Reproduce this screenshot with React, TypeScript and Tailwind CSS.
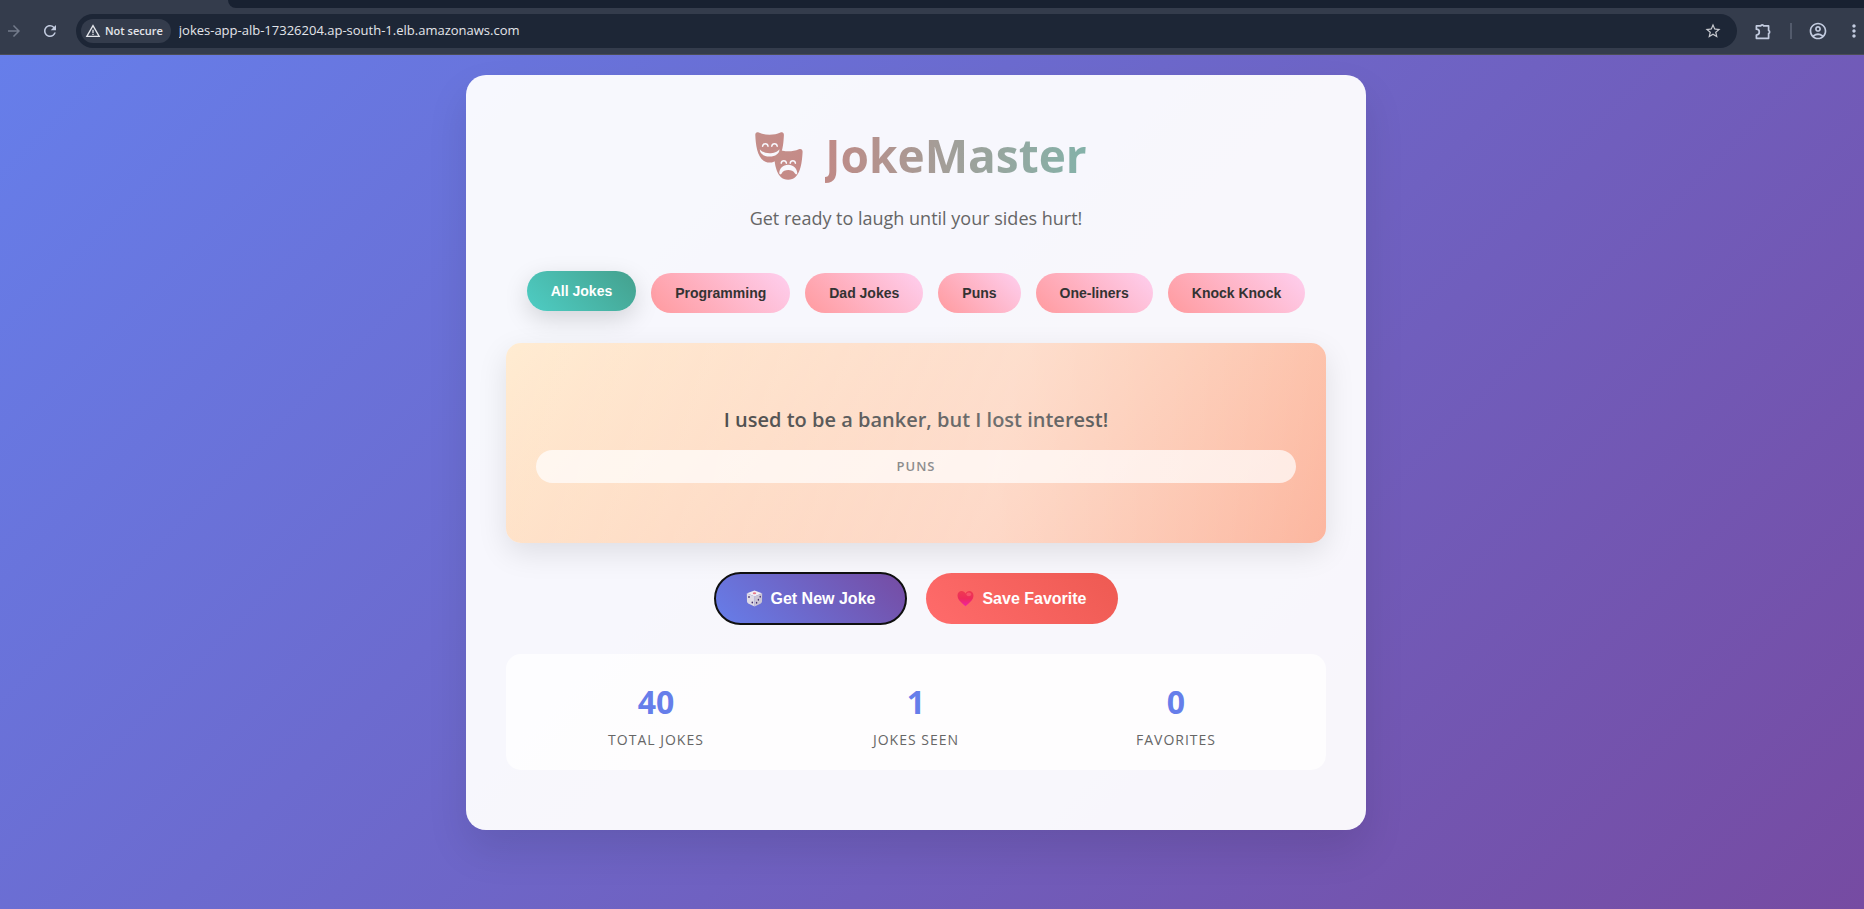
import React from "react";
import {
  MdArrowForward,
  MdMoreVert,
  MdOutlineAccountCircle,
  MdRefresh,
  MdStarBorder,
  MdWarningAmber,
} from "react-icons/md";

const categories = ["All Jokes", "Programming", "Dad Jokes", "Puns", "One-liners", "Knock Knock"];

const stats = [
  { value: 40, label: "Total Jokes" },
  { value: 1, label: "Jokes Seen" },
  { value: 0, label: "Favorites" },
];

function PuzzleIcon() {
  return (
    <svg viewBox="0 0 17 17" className="size-[17px]" fill="none" stroke="currentColor" strokeWidth="1.7" strokeLinejoin="round" aria-hidden="true">
      <path d="M1.4 2.9H5.7A1.6 1.6 0 0 1 8.7 2.9H13.6V7.5A1.6 1.6 0 0 1 13.6 10.5V15.3H1.4V12A2.8 2.8 0 0 0 1.4 6.2Z" />
    </svg>
  );
}

function MasksIcon() {
  return (
    <svg viewBox="0 0 48 48" className="ml-[10px] size-12 shrink-0" role="img" aria-label="Theatre masks">
      <defs>
        <linearGradient id="masks" x1="0" y1="0" x2="1" y2="1">
          <stop offset="0" stopColor="#c38f8a" />
          <stop offset="1" stopColor="#c68886" />
        </linearGradient>
      </defs>
      <g fill="url(#masks)">
        <path d="M0.3 3C0.2 0.6 1.8 -0.3 3.8 0.6C10 3.6 19.2 3.6 25.4 0.6C27.4 -0.3 29 0.6 28.9 3C28.4 14 27 30.6 14.8 30.6C2.6 30.6 0.8 14 0.3 3Z" />
        <path d="M18.9 20C18.8 17.6 20.4 16.3 22.6 17.2C29 20 37.6 20 43.8 17.2C46 16.3 47.7 17.4 47.6 19.8C47 31 45.4 47.8 33.2 47.8C21 47.8 19.4 31 18.9 20Z" />
      </g>
      <path d="M4.9 17.2C8 22.6 21 22.6 24.3 17.2C25 21 21 24.6 14.6 24.6C8.2 24.6 4.4 21 4.9 17.2Z" fill="#f8f8fd" />
      <path d="M24.3 41.6C24.3 36.4 28 32.8 33.2 32.8S42.2 36.4 42.3 41.6C41.6 43 40.4 42.4 39.8 41.2C37.6 37 28.8 37 26.8 41.2C26.2 42.4 25 43 24.3 41.6Z" fill="#f8f8fd" />
      <g fill="none" stroke="#f8f8fd" strokeWidth="1.5" strokeLinecap="round">
        <path d="M7.6 14.2C8 10.9 12.6 10.9 13 14.2M16.8 14.2C17.2 10.9 21.8 10.9 22.2 14.2" />
        <path d="M26.2 31.2C26.6 27.9 31 27.9 31.4 31.2M35.2 31.2C35.6 27.9 40 27.9 40.4 31.2" />
      </g>
    </svg>
  );
}

function DieIcon() {
  return (
    <svg viewBox="0 0 17 17" className="size-[17px]" aria-hidden="true">
      <path d="M8.5 0.6L16 3.2L8.6 6.4L1 3.2Z" fill="#f1edf2" />
      <path d="M0.8 3.2L8.6 6.4V16.4L2.2 13.4Q1 12.8 1 11.6Z" fill="#dfdbe5" />
      <path d="M16.2 3.2L8.6 6.4V16.4L14.8 13.4Q16 12.8 16 11.6Z" fill="#cbc5d4" />
      <ellipse cx="8.5" cy="3.2" rx="1.7" ry="1" fill="#e8788a" />
      <g fill="#45306a">
        <ellipse cx="3" cy="7.1" rx="0.8" ry="1" />
        <ellipse cx="6.3" cy="12.5" rx="0.8" ry="1" />
        <ellipse cx="14.2" cy="6.8" rx="0.7" ry="1" />
        <ellipse cx="12.4" cy="9.8" rx="0.7" ry="1" />
        <ellipse cx="10.6" cy="12.8" rx="0.7" ry="1" />
      </g>
    </svg>
  );
}

function HeartIcon() {
  return (
    <svg viewBox="0 0 17 17" className="size-[17px]" aria-hidden="true">
      <defs>
        <linearGradient id="heart" x1="0" y1="0" x2="0" y2="1">
          <stop offset="0" stopColor="#ef3a50" />
          <stop offset="0.5" stopColor="#ee2a5c" />
          <stop offset="1" stopColor="#f022a4" />
        </linearGradient>
      </defs>
      <path d="M8.5 16.2C6 13.4 0.5 10.4 0.5 5.4C0.5 2.7 2.4 1 4.6 1C6.4 1 7.8 1.9 8.5 3.4C9.2 1.9 10.6 1 12.4 1C14.6 1 16.5 2.7 16.5 5.4C16.5 10.4 11 13.4 8.5 16.2Z" fill="url(#heart)" />
      <ellipse cx="11.8" cy="4.4" rx="2.4" ry="1.8" fill="#ff6b7c" opacity="0.55" />
    </svg>
  );
}

function BrowserBar() {
  return (
    <header className="flex flex-col border-b border-[#4b4d55] bg-[#343c4c] text-[#c3cce0]">
      <div className="flex h-2">
        <div className="w-[228px] shrink-0" />
        <div className="flex-1 rounded-bl-[10px] bg-[#182131]" />
      </div>
      <div className="flex h-[46px] items-center pl-[5px]">
        <button aria-label="Forward" className="text-[#737b8b]">
          <MdArrowForward className="size-[18px]" />
        </button>
        <button aria-label="Reload" className="ml-[18px]">
          <MdRefresh className="size-[18px]" />
        </button>
        <div className="ml-[17px] flex h-[34px] flex-1 items-center rounded-full bg-[#1d2636] pr-[15px] pl-[5px]">
          <button className="flex h-6 items-center gap-1 rounded-full bg-[#343c4c] px-2 pl-1 text-[11px] font-semibold text-[#e3e5ea]">
            <MdWarningAmber className="size-4" />
            Not secure
          </button>
          <input
            aria-label="Address"
            defaultValue="jokes-app-alb-17326204.ap-south-1.elb.amazonaws.com"
            className="ml-2 min-w-0 flex-1 bg-transparent text-[13px] text-[#e3e5ea] outline-none"
          />
          <button aria-label="Bookmark" className="text-[#c8cad0]">
            <MdStarBorder className="size-[18px]" />
          </button>
        </div>
        <button aria-label="Extensions" className="ml-[18px]">
          <PuzzleIcon />
        </button>
        <div className="ml-[18px] h-4 w-[2px] bg-[#535b6c]" />
        <button aria-label="Profile" className="ml-4">
          <MdOutlineAccountCircle className="size-5" />
        </button>
        <button aria-label="Menu" className="ml-4">
          <MdMoreVert className="size-5" />
        </button>
      </div>
    </header>
  );
}

export default function App() {
  return (
    <div className="flex min-h-screen flex-col font-['Open_Sans','Noto_Sans',sans-serif]">
      <BrowserBar />
      <main className="flex-1 bg-[linear-gradient(135deg,#667eea_0%,#764ba2_100%)] py-5 pr-[52px] pl-5">
        <div className="mx-auto flex max-w-[900px] flex-col gap-[30px] rounded-[20px] bg-white/95 px-10 pt-10 pb-[60px] shadow-[0_20px_40px_rgba(0,0,0,0.1)]">
          <div className="mb-2 text-center">
            <h1 className="flex items-center justify-center gap-[22px] pt-1 text-[46px] leading-[73px] font-bold">
              <MasksIcon />
              <span className="bg-[linear-gradient(90deg,#c08a86,#a0a09a_50%,#84b2a9)] bg-clip-text text-transparent">JokeMaster</span>
            </h1>
            <p className="mt-[10px] text-[18px] leading-[33px] text-[#666]">Get ready to laugh until your sides hurt!</p>
          </div>

          <nav aria-label="Joke categories" className="flex flex-wrap justify-center gap-[15px] font-['Liberation_Sans',Arial,sans-serif] text-[14px] leading-4 font-bold">
            {categories.map((name, i) => (
              <button
                key={name}
                className={
                  i === 0
                    ? "-translate-y-[2px] rounded-[25px] bg-[linear-gradient(45deg,#4ecdc4,#44a08d)] px-6 py-3 text-white shadow-[0_8px_25px_rgba(0,0,0,0.15)]"
                    : "rounded-[25px] bg-[linear-gradient(45deg,#ff9a9e,#fecfef)] px-6 py-3 text-[#333]"
                }
              >
                {name}
              </button>
            ))}
          </nav>

          <section className="relative flex min-h-[200px] flex-col justify-center overflow-hidden rounded-[15px] bg-[linear-gradient(135deg,#ffecd2_0%,#fcb69f_100%)] p-[30px] text-center shadow-[0_10px_30px_rgba(0,0,0,0.1)]">
            <p className="text-[20px] leading-8 font-semibold text-[#333]">I used to be a banker, but I lost interest!</p>
            <p className="mt-[14px] rounded-[20px] bg-white/70 text-[13px] leading-[33px] font-semibold tracking-[1px] text-[#666] uppercase">Puns</p>
            <div className="pointer-events-none absolute inset-0 bg-[linear-gradient(100deg,transparent_0%,rgba(255,255,255,0.3)_60%,transparent_100%)]" />
          </section>

          <div className="flex flex-wrap justify-center gap-5 font-['Liberation_Sans',Arial,sans-serif] text-[16px] leading-[21px] font-bold text-white">
            <button className="flex items-center gap-2 rounded-[30px] bg-[linear-gradient(45deg,#667eea,#764ba2)] px-[31px] py-[15px] outline-2 -outline-offset-1 outline-[#101010]">
              <DieIcon />
              Get New Joke
            </button>
            <button className="flex items-center gap-2 rounded-[30px] bg-[linear-gradient(45deg,#ff6b6b,#ee5a52)] px-[31px] py-[15px]">
              <HeartIcon />
              Save Favorite
            </button>
          </div>

          <dl className="grid grid-cols-3 rounded-[15px] bg-white/80 px-5 pt-[22px] pb-[18px] text-center">
            {stats.map(({ value, label }) => (
              <div key={label} className="flex flex-col-reverse">
                <dt className="text-[14px] leading-6 tracking-[1px] text-[#666] uppercase">{label}</dt>
                <dd className="text-[32px] leading-[52px] font-bold text-[#667eea]">{value}</dd>
              </div>
            ))}
          </dl>
        </div>
      </main>
    </div>
  );
}
